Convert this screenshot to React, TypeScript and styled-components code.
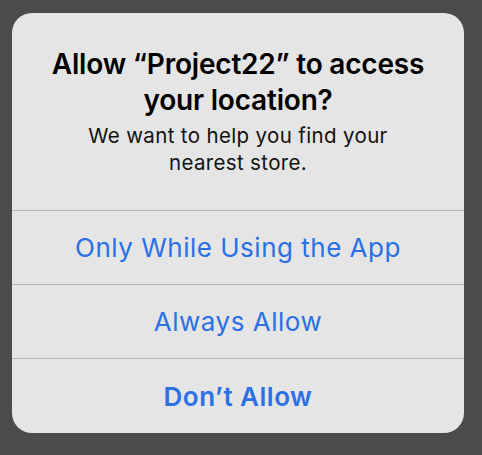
import React from 'react';
import styled, { createGlobalStyle } from 'styled-components';

const GlobalStyle = createGlobalStyle`
  html, body {
    margin: 0;
    padding: 0;
    background: #4b4b4b;
  }
  body {
    font-family: Inter, "Noto Sans", "Liberation Sans", sans-serif;
  }
`;

const Screen = styled.div`
  width: 482px;
  height: 455px;
  padding: 13px 18px 0 12px;
  box-sizing: border-box;
`;

const Alert = styled.div`
  width: 452px;
  background: #e5e5e5;
  border-radius: 20px;
  overflow: hidden;
  display: flex;
  flex-direction: column;
`;

const Header = styled.div`
  height: 198px;
  box-sizing: border-box;
  padding: 33px 16px 0;
  text-align: center;
  border-bottom: 1px solid #b6b6b6;
`;

const Title = styled.h1`
  margin: 0;
  font-size: 28px;
  line-height: 36px;
  font-weight: 600;
  color: #000;
  letter-spacing: -0.2px;
`;

const Message = styled.p`
  margin: 4px 0 0;
  font-size: 20.5px;
  line-height: 27px;
  font-weight: 400;
  color: #111;
  letter-spacing: 0.35px;
`;

const Action = styled.button<{ $bold?: boolean; $last?: boolean }>`
  height: 74px;
  border: none;
  border-bottom: ${(p) => (p.$last ? 'none' : '1px solid #b6b6b6')};
  background: transparent;
  font-family: inherit;
  font-size: 26px;
  letter-spacing: 0.5px;
  font-weight: ${(p) => (p.$bold ? 600 : 400)};
  color: #2a70e6;
  padding: 0;
  cursor: pointer;
`;

export default function App() {
  return (
    <>
      <GlobalStyle />
      <Screen>
        <Alert>
          <Header>
            <Title>
              Allow “Project22” to access
              <br />
              your location?
            </Title>
            <Message>
              We want to help you find your
              <br />
              nearest store.
            </Message>
          </Header>
          <Action>Only While Using the App</Action>
          <Action>Always Allow</Action>
          <Action $bold $last>
            Don’t Allow
          </Action>
        </Alert>
      </Screen>
    </>
  );
}
